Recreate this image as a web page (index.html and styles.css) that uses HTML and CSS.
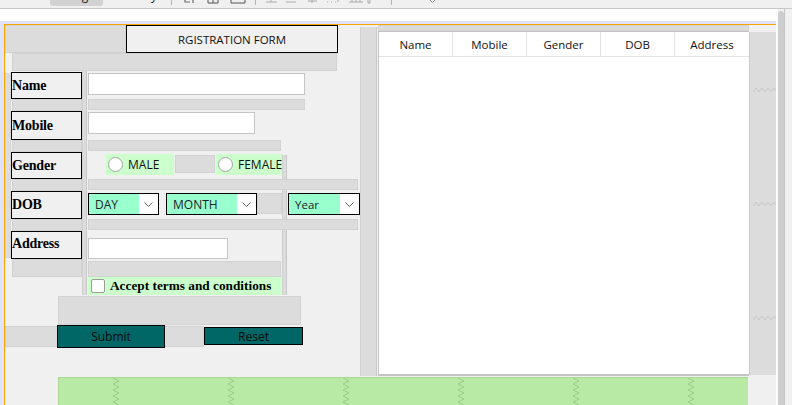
FILE: index.html
```html
<!DOCTYPE html>
<html>
<head>
<meta charset="utf-8">
<title>Registration Form - Design</title>
<link rel="stylesheet" href="styles.css">
</head>
<body>
<div class="toolbar">
  <div class="tb-tab tb-source"><span class="tb-text">Source</span></div>
  <div class="tb-tab tb-design"><span class="tb-text">Design</span></div>
  <div class="tb-tab tb-history"><span class="tb-text">History</span></div>
  <div class="tb-sep sep1"></div>
  <svg class="tb-ico i1" width="14" height="4" viewBox="0 0 14 4"><path d="M1 0v2h5M9 0v3" stroke="#6a6a6a" stroke-width="1.2" fill="none"/></svg>
  <svg class="tb-ico i2" width="12" height="4" viewBox="0 0 12 4"><path d="M1 0v3h10V0M6 0v3" stroke="#555" stroke-width="1" fill="none"/></svg>
  <svg class="tb-ico i3" width="16" height="4" viewBox="0 0 16 4"><path d="M1 0v3h14V0" stroke="#555" stroke-width="1" fill="none"/></svg>
  <div class="tb-sep sep2"></div>
  <svg class="tb-ico i4" width="11" height="4" viewBox="0 0 11 4"><path d="M0 2h11M5 0v2" stroke="#aaa" stroke-width="1" fill="none"/></svg>
  <svg class="tb-ico i5" width="10" height="4" viewBox="0 0 10 4"><path d="M0 2h10" stroke="#aaa" stroke-width="1" fill="none"/></svg>
  <svg class="tb-ico i6" width="9" height="4" viewBox="0 0 9 4"><path d="M0 1h9M4 0v3" stroke="#aaa" stroke-width="1" fill="none"/></svg>
  <svg class="tb-ico i7" width="14" height="4" viewBox="0 0 14 4"><path d="M1 2h1M5 2h1M9 2h1M12 0v2" stroke="#aaa" stroke-width="1" fill="none"/></svg>
  <svg class="tb-ico i8" width="14" height="4" viewBox="0 0 14 4"><path d="M0 2h14M3 0v2M7 0v2M11 0v2" stroke="#aaa" stroke-width="1" fill="none"/></svg>
  <svg class="tb-ico i9" width="4" height="4" viewBox="0 0 4 4"><path d="M1 0v3h2V0" stroke="#aaa" stroke-width="1" fill="none"/></svg>
  <div class="tb-sep sep3"></div>
  <svg class="tb-ico i10" width="5" height="4" viewBox="0 0 5 4"><path d="M0 0l2.5 2.5L5 0" stroke="#999" stroke-width="1" fill="none"/></svg>
</div>

<div class="workspace">
  <div class="design">
    <div class="designer">
      <div class="frame">
        <div class="gap g-topleft"></div>
        <div class="title">RGISTRATION FORM</div>
        <div class="gap g-header"></div>
        <div class="gap g-leftstrip"></div>
        <div class="vstrip v-labels"></div>
        <div class="vstrip v-gender"></div>

        <div class="lbl lbl-name">Name</div>
        <div class="gap lg lg1"></div>
        <div class="lbl lbl-mobile">Mobile</div>
        <div class="gap lg lg2"></div>
        <div class="lbl lbl-gender">Gender</div>
        <div class="gap lg lg3"></div>
        <div class="lbl lbl-dob">DOB</div>
        <div class="gap lg lg4"></div>
        <div class="lbl lbl-address">Address</div>
        <div class="gap lg lg5"></div>

        <div class="field f-name"></div>
        <div class="gap rb rb-name"></div>
        <div class="field f-mobile"></div>
        <div class="gap rb rb-mobile"></div>

        <div class="radio r-male"><span class="dot"></span><span>MALE</span></div>
        <div class="gap g-gender"></div>
        <div class="radio r-female"><span class="dot"></span><span>FEMALE</span></div>
        <div class="gap rb rb-gender"></div>

        <div class="combo c-day"><span class="combo-text">DAY</span><span class="combo-arrow"><svg width="9" height="5" viewBox="0 0 9 5"><path d="M0.5 0.5l4 4 4-4" stroke="#666" stroke-width="1" fill="none"/></svg></span></div>
        <div class="combo c-month"><span class="combo-text">MONTH</span><span class="combo-arrow"><svg width="9" height="5" viewBox="0 0 9 5"><path d="M0.5 0.5l4 4 4-4" stroke="#666" stroke-width="1" fill="none"/></svg></span></div>
        <div class="gap g-dob"></div>
        <div class="combo c-year"><span class="combo-text">Year</span><span class="combo-arrow"><svg width="9" height="5" viewBox="0 0 9 5"><path d="M0.5 0.5l4 4 4-4" stroke="#666" stroke-width="1" fill="none"/></svg></span></div>
        <div class="gap rb rb-dob"></div>

        <div class="field f-address"></div>
        <div class="gap rb rb-address"></div>

        <div class="check"><span class="box"></span><span>Accept terms and conditions</span></div>
        <div class="gap g-big"></div>
        <div class="gap g-buttons"></div>
        <div class="btn b-submit">Submit</div>
        <div class="btn b-reset">Reset</div>

        <div class="vstrip v-mid"></div>
        <div class="gap g-tabletop"></div>
        <div class="table">
          <div class="thead">
            <div class="th">Name</div>
            <div class="th">Mobile</div>
            <div class="th">Gender</div>
            <div class="th">DOB</div>
            <div class="th">Address</div>
          </div>
        </div>
        <div class="tstrip">
          <svg width="24" height="6" viewBox="0 0 24 6"><path d="M0 5l3-4 3 4 3-4 3 4 3-4 3 4 3-4 2 3" stroke="#c6c6c6" stroke-width="1" fill="none"/></svg>
          <svg width="24" height="6" viewBox="0 0 24 6"><path d="M0 5l3-4 3 4 3-4 3 4 3-4 3 4 3-4 2 3" stroke="#c6c6c6" stroke-width="1" fill="none"/></svg>
          <svg width="24" height="6" viewBox="0 0 24 6"><path d="M0 5l3-4 3 4 3-4 3 4 3-4 3 4 3-4 2 3" stroke="#c6c6c6" stroke-width="1" fill="none"/></svg>
        </div>
        <div class="green">
          <svg width="8" height="28" viewBox="0 0 8 28"><path d="M1 0l6 3-6 3 6 3-6 3 6 3-6 3 6 3-6 3 6 3" stroke="#9ccb8a" stroke-width="1" fill="none"/></svg>
          <svg width="8" height="28" viewBox="0 0 8 28"><path d="M1 0l6 3-6 3 6 3-6 3 6 3-6 3 6 3-6 3 6 3" stroke="#9ccb8a" stroke-width="1" fill="none"/></svg>
          <svg width="8" height="28" viewBox="0 0 8 28"><path d="M1 0l6 3-6 3 6 3-6 3 6 3-6 3 6 3-6 3 6 3" stroke="#9ccb8a" stroke-width="1" fill="none"/></svg>
          <svg width="8" height="28" viewBox="0 0 8 28"><path d="M1 0l6 3-6 3 6 3-6 3 6 3-6 3 6 3-6 3 6 3" stroke="#9ccb8a" stroke-width="1" fill="none"/></svg>
          <svg width="8" height="28" viewBox="0 0 8 28"><path d="M1 0l6 3-6 3 6 3-6 3 6 3-6 3 6 3-6 3 6 3" stroke="#9ccb8a" stroke-width="1" fill="none"/></svg>
          <svg width="8" height="28" viewBox="0 0 8 28"><path d="M1 0l6 3-6 3 6 3-6 3 6 3-6 3 6 3-6 3 6 3" stroke="#9ccb8a" stroke-width="1" fill="none"/></svg>
        </div>
      </div>
    </div>
  </div>
  <div class="vscroll"><div class="thumb"></div></div>
</div>
</body>
</html>
```

FILE: styles.css
```css
* { box-sizing: border-box; }
html, body { margin: 0; padding: 0; }
body {
  width: 792px;
  height: 405px;
  overflow: hidden;
  background: #f0f0f0;
  font-family: "Open Sans", "Noto Sans", sans-serif;
  font-size: 11.5px;
  color: #000;
}

/* ---------- toolbar (cut off at top) ---------- */
.toolbar {
  height: 9px;
  border-bottom: 1px solid #c8c8c8;
  background: #f0f0f0;
  display: flex;
  align-items: flex-start;
  overflow: hidden;
}
.tb-tab {
  height: 6px;
  text-align: center;
  border-radius: 0 0 3px 3px;
  overflow: hidden;
}
.tb-text {
  display: block;
  margin-top: -11px;
  line-height: 14px;
  font-size: 12px;
  color: #222;
}
.tb-source { width: 44px; margin-left: 4px; }
.tb-design { width: 53px; margin-left: 2px; background: #d2d2d2; }
.tb-history { width: 52px; margin-left: 8px; }
.tb-sep { width: 1px; height: 5px; background: #b5b5b5; }
.sep1 { margin-left: 8px; }
.sep2 { margin-left: 9px; }
.sep3 { margin-left: 20px; }
.tb-ico { display: block; flex: none; }
.i1 { margin-left: 12px; }
.i2 { margin-left: 9px; }
.i3 { margin-left: 11px; }
.i4 { margin-left: 10px; }
.i5 { margin-left: 9px; }
.i6 { margin-left: 12px; }
.i7 { margin-left: 9px; }
.i8 { margin-left: 9px; }
.i9 { margin-left: 4px; }
.i10 { margin-left: 38px; }

/* ---------- workspace ---------- */
.workspace { display: flex; height: 396px; }
.design {
  width: 776px;
  background: #fff;
  padding-top: 12px;
  overflow: hidden;
}
.designer {
  height: 384px;
  border-top: 3px solid #e1e1f8;
  border-left: 4px solid #e1e1f8;
}
.frame {
  position: relative;
  height: 381px;
  background: #f0f0f0;
  border-top: 1px solid #f7a500;
  border-left: 1px solid #f7a500;
  overflow: hidden;
}
.vscroll {
  width: 16px;
  background: #f0f0f0;
  border-left: 2px solid #fafafa;
  border-right: 5px solid #f0f0f0;
  position: relative;
  box-shadow: inset -2px 0 0 #f0f0f0, inset -3px 0 0 #c6c6c6;
}
.thumb {
  width: 6px;
  margin-top: 2px;
  height: 400px;
  background: #cdcdcd;
  border-radius: 3px 3px 0 0;
}

/* ---------- designer canvas: components at their absolute-layout positions ---------- */
.frame > div { position: absolute; }
.gap {
  background: #dcdcdc;
  border: 1px solid #d2d2d2;
}
.vstrip {
  background: #dcdcdc;
  border-left: 1px solid #d0d0d0;
  border-right: 1px solid #c8c8c8;
}

.g-topleft { left: 0; top: 0; width: 121px; height: 28px; }
.title {
  left: 121px; top: 0; width: 212px; height: 28px;
  border: 1px solid #000;
  background: #f0f0f0;
  display: flex; align-items: center; justify-content: center;
  color: #111;
}
.g-header { left: 7px; top: 28px; width: 325px; height: 18px; }
.g-leftstrip { left: 0; top: 48px; width: 6px; height: 185px; border-color: #d8d8d8; }
.v-labels { left: 77px; top: 46px; width: 5px; height: 224px; }
.v-gender { left: 277px; top: 130px; width: 5px; height: 140px; }

.lbl {
  left: 6px; width: 71px; height: 27px;
  border: 1px solid #000;
  background: #f0f0f0;
  font-family: "Liberation Serif", "Times New Roman", serif;
  font-weight: bold;
  font-size: 14px;
  display: flex; align-items: center;
  padding-left: 0;
  letter-spacing: -0.2px;
}
.lbl-name { top: 47px; }
.lbl-mobile { top: 86px; height: 29px; }
.lbl-gender { top: 127px; }
.lbl-dob { top: 166px; height: 28px; }
.lbl-address { top: 206px; height: 28px; padding-bottom: 2px; }

.lg { left: 7px; width: 70px; height: 12px; }
.lg1 { top: 74px; }
.lg2 { top: 115px; }
.lg3 { top: 154px; }
.lg4 { top: 194px; }
.lg5 { top: 234px; height: 18px; }

.field {
  left: 83px;
  background: #fff;
  border: 1px solid #c5c5c5;
}
.f-name { top: 48px; width: 217px; height: 22px; }
.f-mobile { top: 87px; width: 167px; height: 22px; }
.f-address { top: 213px; width: 140px; height: 21px; }

.rb { left: 83px; height: 11px; }
.rb-name { top: 74px; width: 217px; }
.rb-mobile { top: 115px; width: 193px; }
.rb-gender { top: 154px; width: 270px; }
.rb-dob { top: 194px; width: 270px; }
.rb-address { top: 236px; width: 193px; height: 16px; }

.radio {
  top: 129px; height: 21px;
  background: #ccffcc;
  display: flex; align-items: center;
  gap: 5px;
  padding-left: 2px;
  font-size: 12px;
  color: #111;
}
.r-male { left: 101px; width: 68px; }
.r-female { left: 211px; width: 66px; }
.dot {
  width: 15px; height: 15px;
  border-radius: 50%;
  background: #fff;
  border: 1px solid #a2a2a2;
  flex: none;
}
.g-gender { left: 170px; top: 130px; width: 40px; height: 18px; }

.combo {
  top: 168px; height: 22px;
  border: 1px solid #000;
  display: flex;
  font-size: 12px;
  color: #1c2430;
}
.c-day { left: 83px; width: 71px; }
.c-month { left: 161px; width: 91px; }
.c-year { left: 283px; width: 72px; }
.combo-text {
  flex: 1;
  background: #99ffcc;
  padding-left: 6px;
  display: flex; align-items: center;
}
.c-year .combo-text { font-size: 11.5px; }
.combo-arrow {
  width: 19px;
  background: #fff;
  display: flex; align-items: center; justify-content: center;
}
.g-dob { left: 252px; top: 168px; width: 25px; height: 21px; }

.check {
  left: 83px; top: 252px; width: 193px; height: 18px;
  background: #ccffcc;
  display: flex; align-items: center;
  gap: 5px;
  padding-left: 3px;
  font-family: "Liberation Serif", "Times New Roman", serif;
  font-weight: bold;
  font-size: 13.3px;
}
.box {
  width: 14px; height: 14px;
  background: #fff;
  border: 1px solid #9a9a9a;
  border-radius: 2px;
  flex: none;
}
.g-big { left: 53px; top: 271px; width: 243px; height: 29px; }
.g-buttons { left: 0; top: 301px; width: 199px; height: 21px; }
.btn {
  background: #006666;
  border: 1px solid #000;
  display: flex; align-items: center; justify-content: center;
  font-size: 12px;
  color: #0a0a0a;
}
.b-submit { left: 52px; top: 300px; width: 108px; height: 23px; }
.b-reset { left: 199px; top: 302px; width: 99px; height: 18px; }

.v-mid { left: 355px; top: 2px; width: 17px; height: 349px; }
.g-tabletop { left: 373px; top: 0; width: 371px; height: 6px; }
.table {
  left: 373px; top: 6px; width: 371px; height: 345px;
  background: #fff;
  border-left: 1px solid #c4c4c4;
  border-top: 1px solid #c4c4c4;
  border-bottom: 2px solid #c4c4c4;
}
.thead { display: flex; height: 25px; border-bottom: 1px solid #e3e3e3; }
.th {
  width: 74px;
  border-right: 1px solid #e3e3e3;
  display: flex; align-items: center; justify-content: center;
  font-size: 11.5px;
  color: #111;
}
.th:last-child { border-right: none; }
.tstrip {
  left: 744px; top: 7px; width: 27px; height: 343px;
  background: #dcdcdc;
  border-left: 1px solid #c8c8c8;
  display: flex; flex-direction: column;
  padding: 55px 0 0 3px;
  gap: 108px;
}
.green {
  left: 53px; top: 352px; width: 690px; height: 40px;
  background: #b8eaa5;
  border-top: 1px solid #a9d898;
  border-left: 1px solid #a9d898;
  display: flex;
  padding-left: 53px;
  gap: 107px;
}
.tstrip svg, .green svg { display: block; flex: none; }
```
